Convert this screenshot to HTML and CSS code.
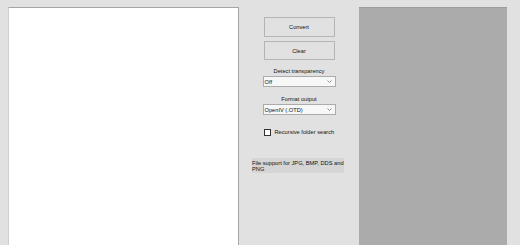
FILE: index.html
```html
<!DOCTYPE html>
<html lang="en">
<head>
    <meta charset="UTF-8">
    <meta name="viewport" content="width=device-width, initial-scale=1.0">
    <title>Texture Converter</title>
    <link rel="stylesheet" href="styles.css">
</head>
<body>
    <div class="app">
        <!-- File list -->
        <div class="file-list"></div>

        <!-- Options -->
        <div class="controls">
            <button class="btn btn-convert">Convert</button>
            <button class="btn btn-clear">Clear</button>

            <div class="field">
                <label class="field-label">Detect transparency</label>
                <div class="combo">
                    <span>Off</span>
                    <svg width="5" height="3" viewBox="0 0 5 3"><path d="M0.5 0.5 L2.5 2.5 L4.5 0.5" fill="none" stroke="#7a7a7a" stroke-width="0.8"/></svg>
                </div>
            </div>

            <div class="field">
                <label class="field-label">Format output</label>
                <div class="combo">
                    <span>OpenIV (.OTD)</span>
                    <svg width="5" height="3" viewBox="0 0 5 3"><path d="M0.5 0.5 L2.5 2.5 L4.5 0.5" fill="none" stroke="#7a7a7a" stroke-width="0.8"/></svg>
                </div>
            </div>

            <div class="check-row">
                <span class="check-box"></span>
                <span>Recursive folder search</span>
            </div>

            <div class="info">File support for JPG, BMP, DDS and PNG</div>
        </div>

        <!-- Preview -->
        <div class="preview"></div>
    </div>
</body>
</html>
```

FILE: styles.css
```css
body {
    margin: 0;
    padding: 0;
    background-color: #e1e1e1;
    font-family: "Liberation Sans", Arial, sans-serif;
    font-size: 5.7px;
    color: #111;
}

.app {
    display: flex;
    height: 245px;
    padding: 7px 0 0 8px;
    box-sizing: border-box;
}

.file-list {
    width: 229px;
    background: #fff;
    border-top: 1px solid #a5a5a5;
    border-left: 1px solid #cfcfcf;
    border-right: 1px solid #a5a5a5;
}

.controls {
    width: 120px;
    display: flex;
    flex-direction: column;
    align-items: center;
    padding-top: 10px;
}

.btn {
    display: block;
    width: 71px;
    height: 20px;
    padding: 0;
    background-color: #e1e1e1;
    border: 1px solid #b4b4b4;
    font-family: inherit;
    font-size: 5.7px;
    color: #111;
}

.btn-clear {
    margin-top: 4px;
    height: 19px;
}

.field {
    display: flex;
    flex-direction: column;
    align-items: center;
    margin-top: 7px;
}

.field + .field {
    margin-top: 8px;
}

.field-label {
    line-height: 8px;
}

.combo {
    display: flex;
    align-items: center;
    justify-content: space-between;
    width: 67px;
    height: 9px;
    padding: 0 3px 0 1px;
    margin-top: 1px;
    background: #f7f7f7;
    border: 1px solid #ababab;
}

.check-row {
    display: flex;
    align-items: center;
    gap: 4px;
    width: 71px;
    margin-top: 13px;
    line-height: 8px;
}

.check-box {
    width: 5px;
    height: 5px;
    background: #fff;
    border: 1px solid #333;
}

.info {
    width: 92px;
    margin-top: 22px;
    margin-left: -2px;
    padding: 2px 0 1px;
    background: #d5d5d5;
    line-height: 6px;
}

.preview {
    width: 148px;
    background: #ababab;
    border-top: 1px solid #9d9d9d;
}
```
